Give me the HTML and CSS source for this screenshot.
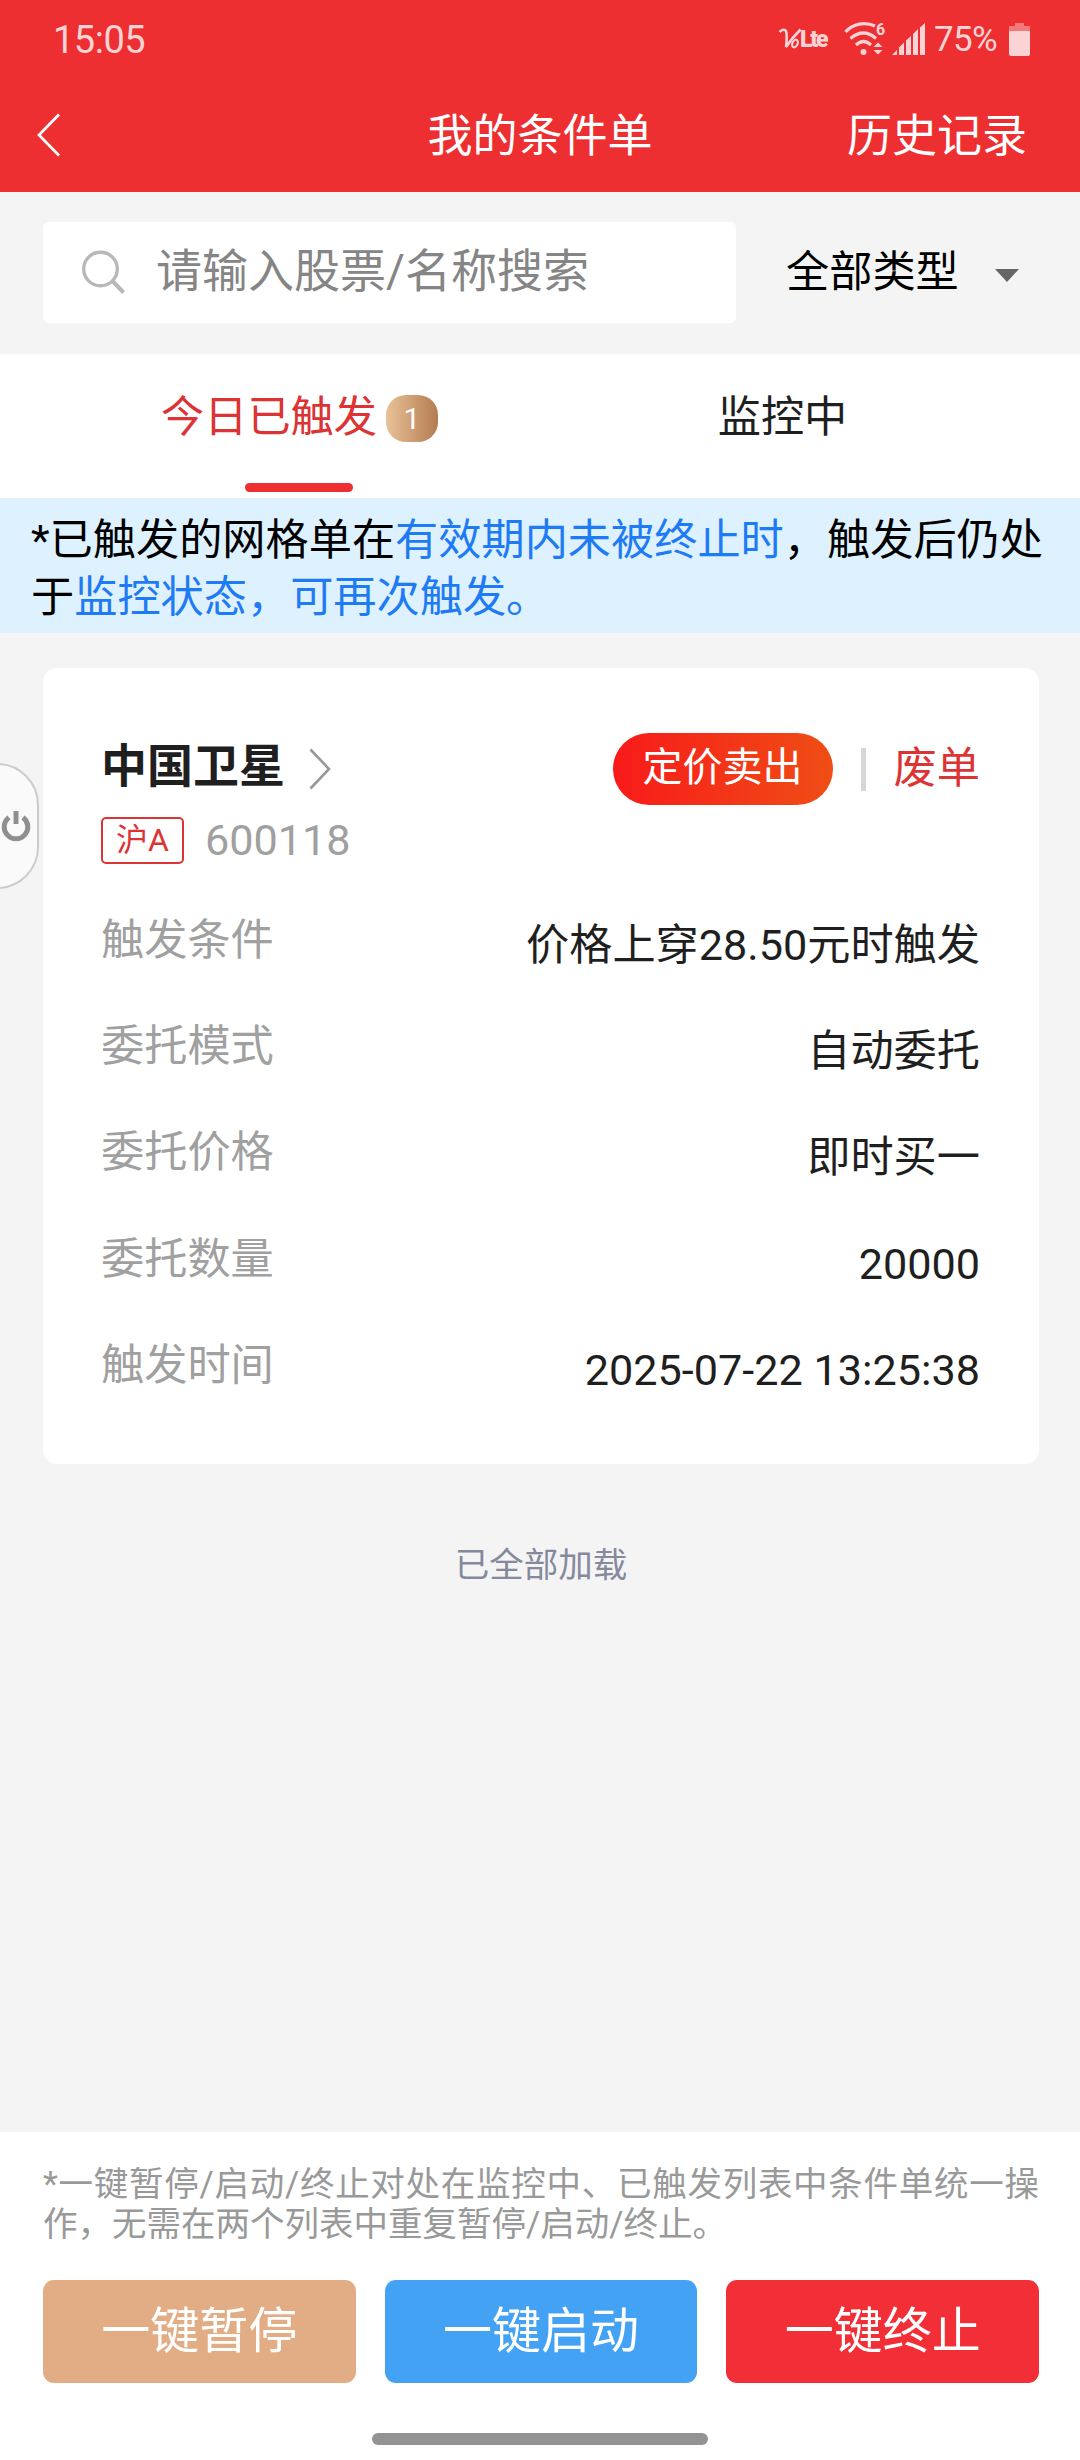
FILE: index.html
```html
<!DOCTYPE html>
<html lang="zh-CN">
<head>
    <meta charset="UTF-8">
    <meta name="viewport" content="width=device-width, initial-scale=1.0">
    <title>我的条件单</title>
    <link rel="stylesheet" href="styles.css">
</head>
<body>
    <header class="header">
        <div class="status-bar">
            <span class="time">15:05</span>
            <div class="status-icons">
                <svg class="volte" width="52" height="26" viewBox="0 0 52 26">
                    <path d="M0.500 6 Q5 2 7 5 Q8.500 9 7 21 Q13 12 21.500 3.500" fill="none" stroke="currentColor" stroke-width="2.600"/>
                    <ellipse cx="16" cy="17.500" rx="2.600" ry="4" fill="none" stroke="currentColor" stroke-width="2.200" transform="rotate(25 16 17.500)"/>
                    <text x="21" y="21" class="lte" textLength="28.500">Lte</text>
                </svg>
                <svg class="wifi" width="42" height="34" viewBox="0 0 42 34">
                    <g fill="none" stroke="currentColor" stroke-width="3.200">
                        <path d="M1.500 10 C9 1.500 21 -0.500 31 4"/>
                        <path d="M6.500 16.500 Q19.500 5.500 32 16.500"/>
                        <path d="M12 23 Q19.500 16 27 23"/>
                    </g>
                    <circle cx="19.500" cy="30" r="3"/>
                    <path d="M29.500 25 L34 20.500 L38.500 25 Z M29.500 28 L38.500 28 L34 32.500 Z"/>
                    <text x="32" y="13" class="wifi-num">6</text>
                </svg>
                <svg class="signal" width="33" height="33" viewBox="0 0 33 33">
                    <path d="M0 32 L5 27 V32 Z M7 32 V24.500 L12 19.500 V32 Z M14 32 V17.500 L19 13 V32 Z M21 32 V11 L26 6 V32 Z M28 32 V4.500 L33 0 V32 Z"/>
                </svg>
                <span class="percent">75%</span>
                <svg class="battery" width="21" height="33" viewBox="0 0 21 33">
                    <path d="M6 0 H15 V3 H21 V8 H0 V3 H6 Z" opacity="0.45"/>
                    <path d="M0 8 H21 V31 Q21 33 19 33 H2 Q0 33 0 31 Z"/>
                </svg>
            </div>
        </div>
        <nav class="nav">
            <svg class="back" width="24" height="44" viewBox="0 0 24 44">
                <path d="M22 1.500 L2 22 L22 42.500" fill="none" stroke="#fff" stroke-width="2.700"/>
            </svg>
            <h1>我的条件单</h1>
            <a class="history">历史记录</a>
        </nav>
    </header>

    <div class="search-row">
        <div class="search-box">
            <svg width="44" height="46" viewBox="0 0 44 46">
                <g fill="none" stroke="#b8b8b8" stroke-width="3.400">
                    <circle cx="18.500" cy="19" r="16.800"/>
                    <path d="M30 30.500 L41.500 42.500" stroke-width="4"/>
                </g>
            </svg>
            <span>请输入股票/名称搜索</span>
        </div>
        <div class="type-select">
            <span>全部类型</span>
            <i class="caret"></i>
        </div>
    </div>

    <div class="tabs">
        <div class="tab active">
            <div class="tab-label"><span>今日已触发</span><span class="badge">1</span></div>
        </div>
        <div class="tab">
            <div class="tab-label"><span>监控中</span></div>
        </div>
    </div>

    <p class="notice">*已触发的网格单在<em>有效期内未被终止时</em>，触发后仍处于<em>监控状态，可再次触发。</em></p>

    <main class="list">
        <div class="card">
            <div class="card-head">
                <h2>中国卫星</h2>
                <svg class="arrow" width="22" height="42" viewBox="0 0 22 42">
                    <path d="M1.500 1.500 L20 21 L1.500 40.500" fill="none" stroke="#999" stroke-width="2.600"/>
                </svg>
                <span class="pill">定价卖出</span>
                <span class="divider"></span>
                <span class="state">废单</span>
            </div>
            <div class="stock">
                <span class="market">沪A</span>
                <span class="code">600118</span>
            </div>
            <dl class="detail">
                <div><dt>触发条件</dt><dd>价格上穿28.50元时触发</dd></div>
                <div><dt>委托模式</dt><dd>自动委托</dd></div>
                <div><dt>委托价格</dt><dd>即时买一</dd></div>
                <div><dt>委托数量</dt><dd>20000</dd></div>
                <div><dt>触发时间</dt><dd>2025-07-22 13:25:38</dd></div>
            </dl>
        </div>
        <p class="loaded">已全部加载</p>
    </main>

    <footer class="footer">
        <p class="tips">*一键暂停/启动/终止对处在监控中、已触发列表中条件单统一操作，无需在两个列表中重复暂停/启动/终止。</p>
        <div class="buttons">
            <button class="pause">一键暂停</button>
            <button class="start">一键启动</button>
            <button class="stop">一键终止</button>
        </div>
        <div class="home-bar"></div>
    </footer>

    <!-- 悬浮按钮 -->
    <div class="float-btn">
        <svg width="30" height="32" viewBox="0 0 30 32">
            <path d="M8 7.500 A11.800 11.800 0 1 0 22 7.500" fill="none" stroke="#8f8f8f" stroke-width="5"/>
            <path d="M15 1 V14" stroke="#8f8f8f" stroke-width="5"/>
        </svg>
    </div>
</body>
</html>
```
FILE: styles.css
```css
* {
    box-sizing: border-box;
    margin: 0;
    padding: 0;
}

body {
    position: relative;
    display: flex;
    flex-direction: column;
    width: 1080px;
    height: 2460px;
    background: #f4f4f4;
    font-family: Roboto, "Noto Sans CJK SC", sans-serif;
    font-size: 43.2px;
    color: #1f1f1f;
    overflow: hidden;
}

.header {
    height: 192px;
    background: #ed2f31;
    color: #fff;
}

.status-bar {
    display: flex;
    justify-content: space-between;
    height: 78px;
    padding: 0 50px 0 53px;
    align-items: center;
    color: #fbd3d4;
}

.time {
    font-size: 38px;
    letter-spacing: -0.5px;
    padding-top: 1px;
}

.status-icons {
    display: flex;
    align-items: center;
}

.status-icons svg {
    fill: currentColor;
    overflow: visible;
}

.volte {
    margin-right: 13px;
}

.lte {
    font-size: 23px;
    font-weight: 900;
}

.wifi {
    margin-right: 6px;
}

.wifi-num {
    font-size: 16px;
    font-weight: bold;
}

.signal {
    margin-right: 9px;
}

.percent {
    width: 63px;
    margin-right: 12px;
    font-size: 35px;
    letter-spacing: -0.7px;
    padding-top: 1px;
}

.nav {
    display: grid;
    grid-template-columns: 1fr auto 1fr;
    align-items: center;
    height: 114px;
    padding: 0 53px 0 37px;
}

.nav h1,
.history {
    font-size: 45px;
    font-weight: normal;
    line-height: 110px;
    padding-top: 4px;
}

.nav h1 {
    padding-left: 16px;
}

.history {
    justify-self: end;
}

.search-row {
    display: flex;
    align-items: center;
    height: 162px;
    padding: 0 61px 0 43px;
}

.search-box {
    display: flex;
    align-items: center;
    width: 693px;
    height: 101px;
    margin-top: -1px;
    padding-left: 39px;
    border-radius: 6px;
    background: #fff;
    color: #858585;
    font-size: 46px;
    gap: 30px;
}

.search-box span {
    padding-bottom: 11px;
}

.type-select {
    flex: 1;
    display: flex;
    align-items: center;
    justify-content: space-between;
    padding-left: 50px;
    color: #000;
}

.type-select span {
    padding-bottom: 10px;
}

.caret {
    border: 12px solid transparent;
    border-top: 13px solid #666;
    border-bottom: 0;
    margin-top: 4px;
}

.tabs {
    display: flex;
    height: 144px;
    padding: 0 56px 0 58px;
    background: #fff;
}

.tab {
    flex: 1;
    display: flex;
    flex-direction: column;
    align-items: center;
}

.tab-label {
    display: flex;
    align-items: center;
    height: 129px;
}

.tab-label span:first-child {
    padding-bottom: 11px;
}

.active {
    color: #dc3334;
}

.active::after {
    content: '';
    width: 108px;
    height: 9px;
    margin-right: 2px;
    border-radius: 5px;
    background: #ed2f31;
}

.badge {
    width: 52px;
    height: 47px;
    margin-left: 9px;
    border-radius: 20px;
    background: linear-gradient(90deg, #e9c297, #b47b51);
    color: #fff;
    font-size: 30px;
    line-height: 47px;
    text-align: center;
}

.notice {
    height: 135px;
    padding: 15px 30px 0 31px;
    background: #def1ff;
    color: #000;
    line-height: 56.5px;
}

.notice em {
    color: #1f7bf4;
    font-style: normal;
}

.list {
    flex: 1;
    padding: 35px 41px 0 43px;
}

.card {
    height: 796px;
    padding: 60px 59px 0 58px;
    border-radius: 14px;
    background: #fff;
}

.card-head {
    display: flex;
    align-items: center;
    height: 82px;
}

.card-head h2 {
    font-size: 46px;
    line-height: 72px;
    margin-right: 24px;
    padding-bottom: 7px;
}

.pill {
    width: 220px;
    height: 72px;
    margin-left: auto;
    border-radius: 36px;
    background: linear-gradient(90deg, #f81a1a, #ef4e15);
    color: #fff;
    font-size: 40px;
    line-height: 69px;
    text-align: center;
}

.divider {
    width: 5px;
    height: 43px;
    margin: 0 28px;
    background: #d6d6d6;
}

.state {
    color: #dc3334;
    padding-bottom: 11px;
}

.stock {
    display: flex;
    align-items: center;
    height: 60px;
    gap: 21px;
}

.market {
    width: 83px;
    height: 47px;
    border: 2px solid #dc3334;
    border-radius: 5px;
    color: #dc3334;
    font-size: 32px;
    line-height: 43px;
    text-align: center;
}

.code {
    color: #a0a0a0;
}

.detail div {
    display: flex;
    justify-content: space-between;
    height: 106.2px;
    line-height: 106.2px;
}

.detail {
    margin-top: 18px;
}

.detail dt {
    color: #a0a0a0;
}

.detail dd {
    padding-top: 5px;
}

.loaded {
    margin-top: 74px;
    color: #85899c;
    font-size: 34.5px;
    line-height: 54px;
    text-align: center;
}

.footer {
    height: 328px;
    padding: 33px 41px 0 43px;
    background: #fff;
}

.tips {
    color: #999;
    font-size: 34.5px;
    line-height: 39.5px;
    text-align: justify;
}

.buttons {
    display: flex;
    gap: 29px;
    margin-top: 36px;
}

.buttons button {
    flex: 1;
    height: 103px;
    padding-bottom: 11px;
    border: none;
    border-radius: 11px;
    color: #fff;
    font-family: inherit;
    font-size: 49px;
}

.pause {
    background: #e2ad84;
}

.start {
    background: #43a2f3;
}

.stop {
    background: #f22f37;
}

.home-bar {
    width: 336px;
    height: 12px;
    margin: 50px 0 0 329px;
    border-radius: 6px;
    background: #939393;
}

.float-btn {
    position: absolute;
    left: -50px;
    top: 763px;
    display: flex;
    align-items: center;
    justify-content: flex-end;
    width: 89px;
    height: 126px;
    padding-right: 6px;
    border: 2px solid #ccc;
    border-radius: 42px;
    background: #fafafa;
}
```
